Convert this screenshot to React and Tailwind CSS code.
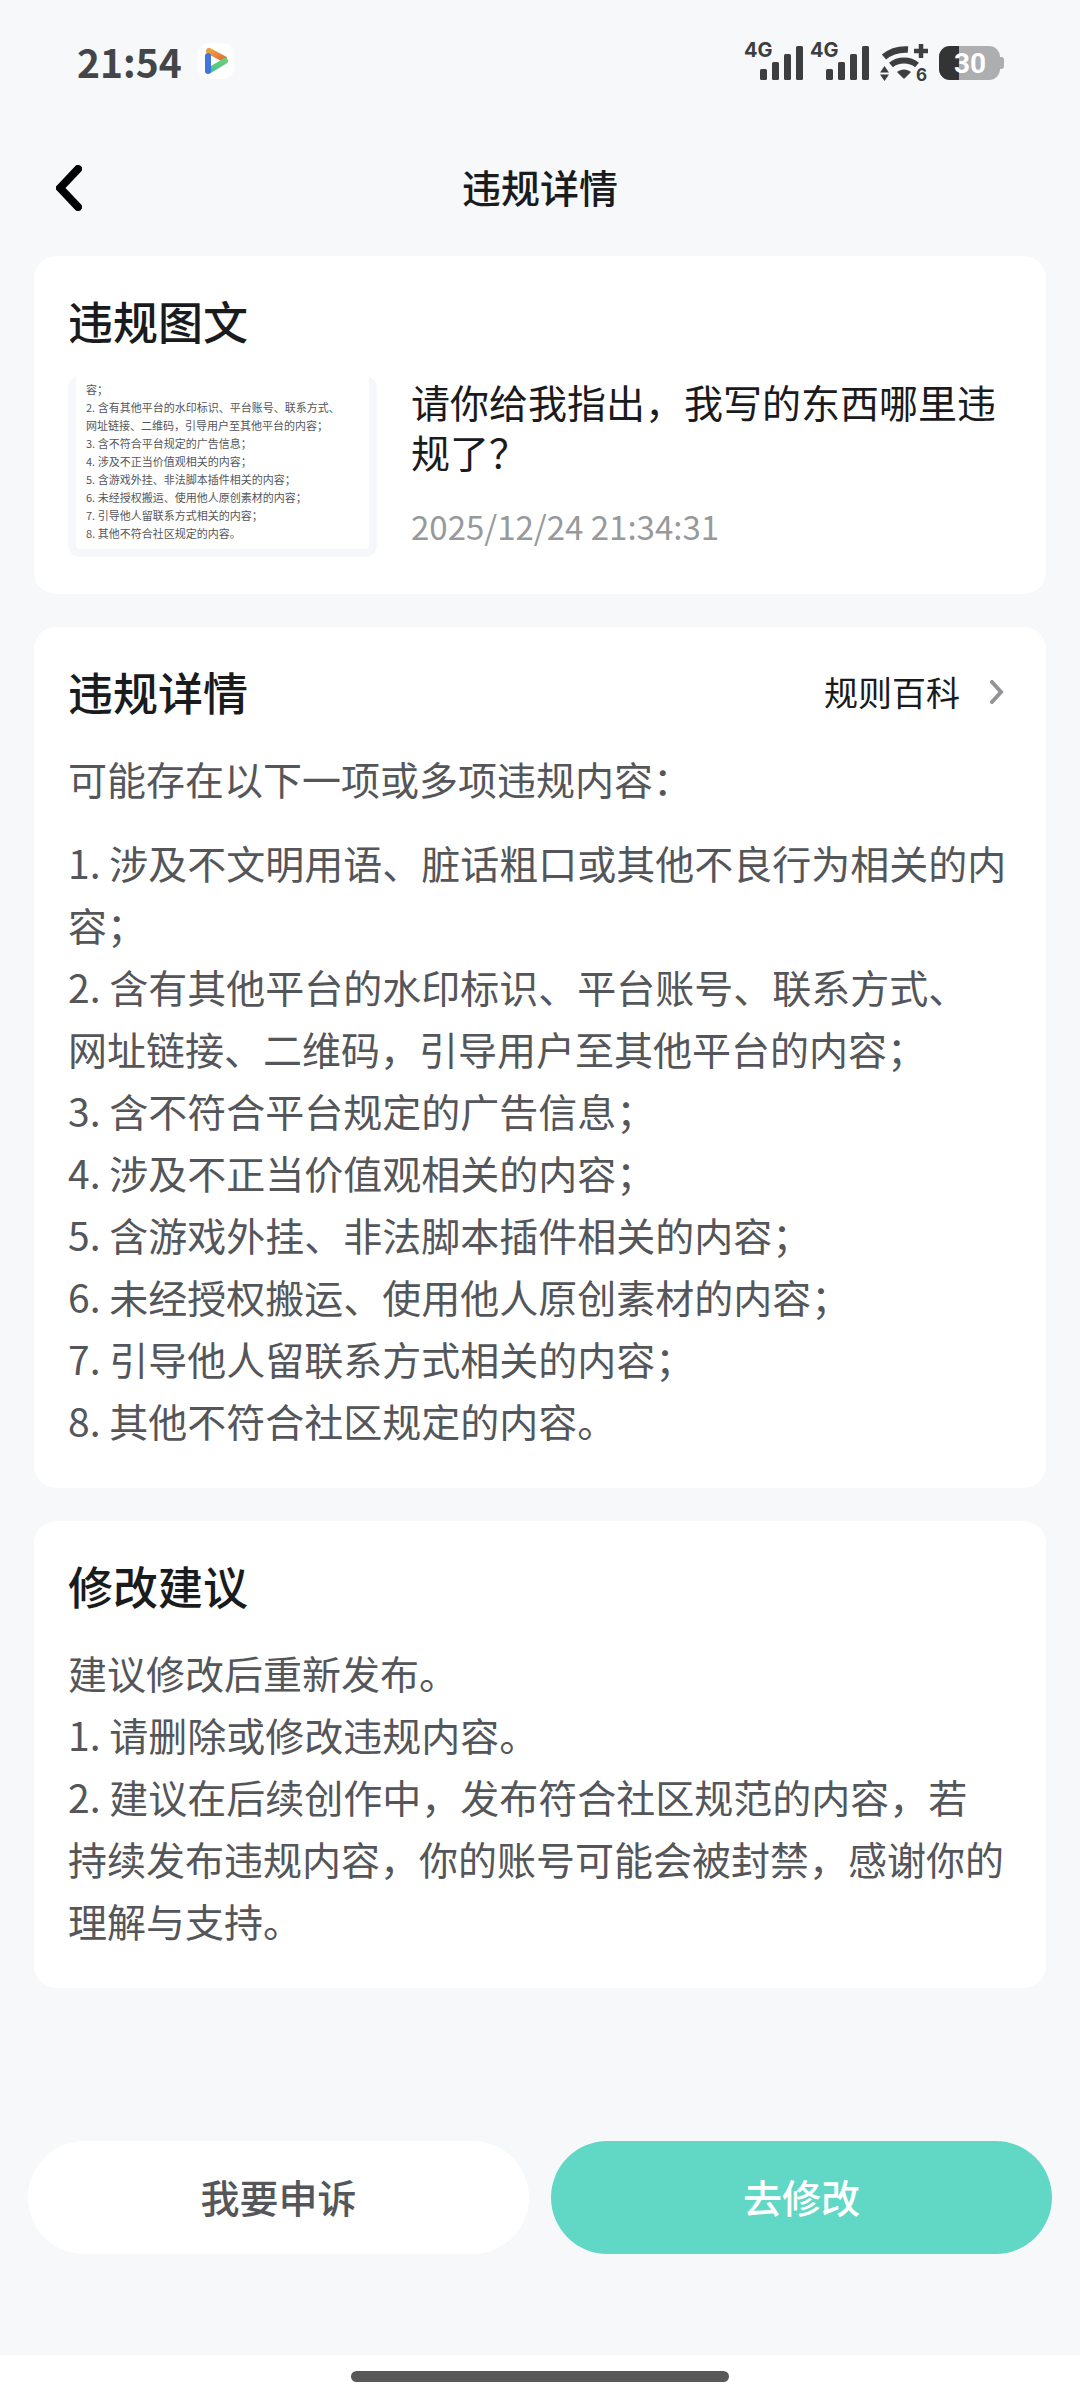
import { useState } from "react";

const RULES = [
  "1. 涉及不文明用语、脏话粗口或其他不良行为相关的内",
  "容；",
  "2. 含有其他平台的水印标识、平台账号、联系方式、",
  "网址链接、二维码，引导用户至其他平台的内容；",
  "3. 含不符合平台规定的广告信息；",
  "4. 涉及不正当价值观相关的内容；",
  "5. 含游戏外挂、非法脚本插件相关的内容；",
  "6. 未经授权搬运、使用他人原创素材的内容；",
  "7. 引导他人留联系方式相关的内容；",
  "8. 其他不符合社区规定的内容。",
];

const SUGGESTIONS = [
  "建议修改后重新发布。",
  "1. 请删除或修改违规内容。",
  "2. 建议在后续创作中，发布符合社区规范的内容，若",
  "持续发布违规内容，你的账号可能会被封禁，感谢你的",
  "理解与支持。",
];

function SignalIcon() {
  return (
    <svg width="59" height="50" viewBox="0 -6 59 50" fill="#3d3e40" aria-label="4G">
      <text x="0" y="15" fontSize="20" fontWeight="700">
        4G
      </text>
      <rect x="16" y="27" width="7" height="11" rx="1.5" />
      <rect x="28" y="20" width="7" height="18" rx="1.5" />
      <rect x="40" y="12" width="7" height="26" rx="1.5" />
      <rect x="52" y="4" width="7" height="34" rx="1.5" />
    </svg>
  );
}

function WifiIcon() {
  return (
    <svg width="48" height="50" viewBox="0 -6 48 50" fill="#3d3e40" aria-label="Wi-Fi 6">
      <path d="M4 15C11 9 19 7 28 7.500" fill="none" stroke="#3d3e40" strokeWidth="6.500" />
      <path d="M11 23C18 17 30 17 37 23" fill="none" stroke="#3d3e40" strokeWidth="6" />
      <path d="M17 30C21 26.500 27 26.500 31 30L25 36Q24 37 23 36Z" />
      <path d="M41 2V16M34 9H48" stroke="#3d3e40" strokeWidth="4.500" />
      <path d="M0 30.500L4.500 24L9 30.500ZM0 32.500L4.500 39L9 32.500Z" />
      <text x="36" y="39" fontSize="17" fontWeight="700">
        6
      </text>
    </svg>
  );
}

function BatteryIcon() {
  return (
    <svg width="65" height="42" viewBox="0 -6 65 42" aria-label="30%">
      <path d="M61 11H62Q65 11 65 14V20Q65 23 62 23H61Z" fill="#adaeaf" />
      <rect width="61" height="34" rx="11" fill="#adaeaf" />
      <path d="M11 0H20V34H11A11 11 0 0 1 0 23V11A11 11 0 0 1 11 0Z" fill="#333436" />
      <text x="31" y="27" textAnchor="middle" fontSize="28" fontWeight="700" fill="#fff" className="font-[Roboto,sans-serif]">
        30
      </text>
    </svg>
  );
}

function VideoAppIcon() {
  return (
    <svg width="36" height="36" viewBox="0 0 36 36" fill="none" strokeWidth="6" strokeLinecap="round">
      <defs>
        <linearGradient id="orange" x1="0" y1="0" x2="1" y2="1">
          <stop offset="0" stopColor="#e8a03c" />
          <stop offset="1" stopColor="#e0703a" />
        </linearGradient>
        <linearGradient id="green" x1="1" y1="0" x2="0" y2="1">
          <stop offset="0" stopColor="#66d07f" />
          <stop offset="1" stopColor="#4fc08c" />
        </linearGradient>
      </defs>
      <rect width="36" height="36" rx="11" fill="#fff" />
      <path d="M11 8L26 16" stroke="url(#orange)" />
      <path d="M27 18L12 27" stroke="url(#green)" />
      <path d="M10 13V28" stroke="#3f76e0" />
    </svg>
  );
}

function Card({ title, action, children }) {
  return (
    <section className="rounded-[22px] bg-white px-[34px] pt-[35px] pb-[37px]">
      <div className="mb-[25px] flex items-center justify-between">
        <h2 className="text-[45px] leading-[60px] font-medium text-[#1a1b1d]">{title}</h2>
        {action}
      </div>
      {children}
    </section>
  );
}

export default function App() {
  const [appealing, setAppealing] = useState(false);

  return (
    <div
      lang="zh-CN"
      className="flex min-h-screen flex-col bg-[#f6f8fa] font-['Noto_Sans_CJK_SC',sans-serif] text-[#54565a]"
    >
      {/* STATUS BAR */}
      <div className="flex h-[126px] items-center justify-between pr-[76px] pb-1 pl-[77px]">
        <div className="flex items-center gap-4">
          <span className="text-[39px] leading-[60px] font-bold text-[#444548]">21:54</span>
          <VideoAppIcon />
        </div>
        <div className="flex items-center gap-[11px] font-[Inter,sans-serif]">
          <div className="flex gap-[7px]">
            <SignalIcon />
            <SignalIcon />
          </div>
          <WifiIcon />
          <BatteryIcon />
        </div>
      </div>

      {/* HEADER */}
      <header className="grid h-[124px] grid-cols-[1fr_auto_1fr] items-center px-[34px]">
        <button type="button" aria-label="返回" className="flex size-[70px] items-center justify-center">
          <svg width="26" height="46" viewBox="0 0 26 46" fill="none" stroke="#000" strokeWidth="8" strokeLinecap="round">
            <path d="M22 4L4 23L22 42" />
          </svg>
        </button>
        <h1 className="pb-1 text-[39px] leading-[50px] font-medium text-[#1a1b1d]">违规详情</h1>
      </header>

      <main className="flex flex-col gap-[33px] px-[34px] pt-[6px] pb-10">
        <Card title="违规图文">
          <div className="flex gap-[34px]">
            <div className="h-[181px] w-[309px] shrink-0 overflow-hidden rounded-xl bg-[#f5f7fa] px-2 pb-2">
              <div className="h-full rounded-b bg-white px-[10px] pt-1">
                {RULES.slice(1).map((line) => (
                  <p key={line} className="text-[11px] leading-[18px] whitespace-nowrap">
                    {line}
                  </p>
                ))}
              </div>
            </div>
            <div>
              <p className="text-[39px] leading-[50px] text-[#1a1b1d]">
                请你给我指出，我写的东西哪里违规了？
              </p>
              <time className="mt-[25px] block text-[33px] leading-[50px] text-[#98999c]">
                2025/12/24 21:34:31
              </time>
            </div>
          </div>
        </Card>

        <Card
          title="违规详情"
          action={
            <a href="#rules" className="flex items-center gap-[30px] pr-2 text-[34px] leading-[50px] text-[#1a1b1d]">
              规则百科
              <svg width="14" height="24" viewBox="0 0 14 24" fill="none" stroke="#929498" strokeWidth="4" strokeLinecap="round">
                <path d="M2 2L11 12L2 22" />
              </svg>
            </a>
          }
        >
          <p className="mb-[22px] text-[39px] leading-[62px]">可能存在以下一项或多项违规内容：</p>
          {RULES.map((line) => (
            <p key={line} className="text-[39px] leading-[62px]">
              {line}
            </p>
          ))}
        </Card>

        <Card title="修改建议">
          {SUGGESTIONS.map((line) => (
            <p key={line} className="text-[39px] leading-[62px]">
              {line}
            </p>
          ))}
        </Card>
      </main>

      {/* BUTTONS */}
      <footer className="mt-auto">
        <div className="flex gap-[22px] px-7 pb-[101px]">
          <button
            type="button"
            aria-pressed={appealing}
            onClick={() => setAppealing((v) => !v)}
            className="h-[113px] flex-1 rounded-full bg-white pb-1 text-[39px] leading-[50px] font-medium"
          >
            我要申诉
          </button>
          <button
            type="button"
            className="h-[113px] flex-1 rounded-full bg-[#61d7c6] pb-1 text-[39px] leading-[50px] font-medium text-white"
          >
            去修改
          </button>
        </div>
        <div className="flex h-[45px] items-start justify-center bg-white pt-4">
          <div className="h-[11px] w-[35%] rounded-full bg-[#585858]" />
        </div>
      </footer>
    </div>
  );
}
